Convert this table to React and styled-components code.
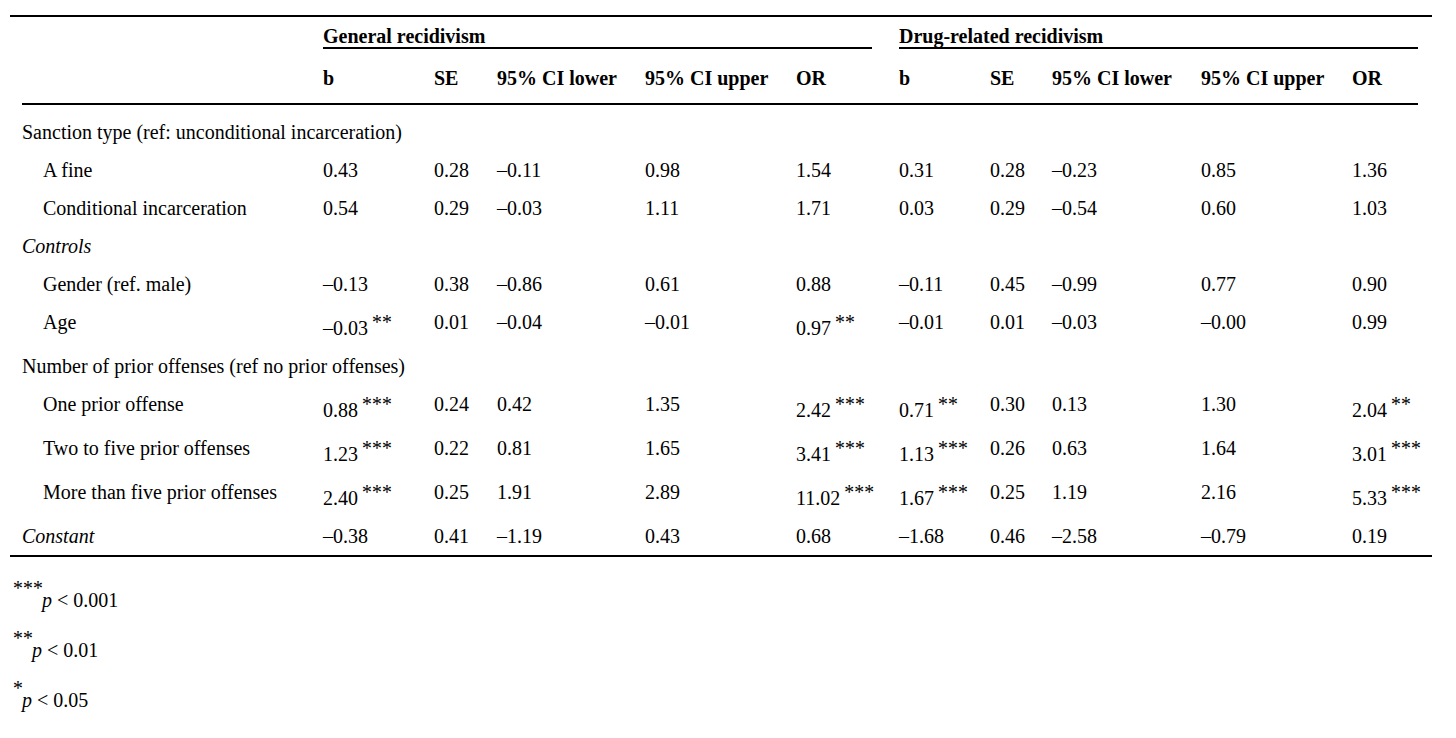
import React from "react";
import styled, { createGlobalStyle } from "styled-components";

const Global = createGlobalStyle`
  html, body { margin: 0; padding: 0; background: #fff; }
  body { font-family: "Liberation Serif", "Times New Roman", serif; color: #000; }
`;

const Page = styled.div`
  padding: 15px 0 0 10px;
`;

const Frame = styled.div`
  box-sizing: border-box;
  width: 1422px;
  border-top: 2px solid #000;
  border-bottom: 2px solid #000;
  padding: 0 14px 0 12px;
`;

const Table = styled.table`
  width: 1396px;
  table-layout: fixed;
  border-collapse: collapse;
  font-family: "Liberation Serif", "Times New Roman", serif;
  font-size: 20px;
  color: #000;
`;

const GroupCell = styled.th`
  padding: 9px 0 0 0;
  text-align: left;
  font-weight: bold;
  line-height: 21px;
  vertical-align: top;
`;

const GroupTitle = styled.div`
  border-bottom: 2px solid #000;
  margin-right: ${(p) => p.$gap || 0}px;
  white-space: nowrap;
`;

const HeadRow = styled.tr`
  border-bottom: 2px solid #000;
`;

const HeadCell = styled.th`
  padding: 17px 0 13px 0;
  text-align: left;
  font-weight: bold;
  line-height: 24px;
  white-space: nowrap;
`;

const Body = styled.tbody`
  & > tr:first-child > td {
    padding-top: 15px;
  }
`;

const Cell = styled.td`
  padding: 7px 0;
  line-height: 24px;
  vertical-align: top;
  text-align: left;
  white-space: nowrap;
`;

const Label = styled(Cell)`
  padding-left: ${(p) => (p.$indent ? 21 : 0)}px;
  font-style: ${(p) => (p.$italic ? "italic" : "normal")};
`;

const Stars = styled.sup`
  font-size: 20px;
  font-style: italic;
  line-height: 24px;
  vertical-align: 6px;
  margin-left: 3px;
`;

const Notes = styled.div`
  font-family: "Liberation Serif", "Times New Roman", serif;
  font-size: 20px;
  padding: 5px 0 0 2px;
`;

const Note = styled.div`
  margin-top: 14px;
  line-height: 24px;
`;

const NoteStars = styled.sup`
  font-size: 20px;
  font-style: italic;
  line-height: 24px;
  vertical-align: 12px;
`;

const P = styled.i``;

const widths = [301, 111, 63, 148, 151, 103, 91, 62, 149, 151, 66];
const heads = ["b", "SE", "95% CI lower", "95% CI upper", "OR", "b", "SE", "95% CI lower", "95% CI upper", "OR"];

const rows = [
  { section: "Sanction type (ref: unconditional incarceration)" },
  { label: "A fine", indent: true, v: ["0.43", "0.28", "–0.11", "0.98", "1.54", "0.31", "0.28", "–0.23", "0.85", "1.36"] },
  { label: "Conditional incarceration", indent: true, v: ["0.54", "0.29", "–0.03", "1.11", "1.71", "0.03", "0.29", "–0.54", "0.60", "1.03"] },
  { section: "Controls", italic: true },
  { label: "Gender (ref. male)", indent: true, v: ["–0.13", "0.38", "–0.86", "0.61", "0.88", "–0.11", "0.45", "–0.99", "0.77", "0.90"] },
  { label: "Age", indent: true, v: ["–0.03**", "0.01", "–0.04", "–0.01", "0.97**", "–0.01", "0.01", "–0.03", "–0.00", "0.99"] },
  { section: "Number of prior offenses (ref no prior offenses)" },
  { label: "One prior offense", indent: true, v: ["0.88***", "0.24", "0.42", "1.35", "2.42***", "0.71**", "0.30", "0.13", "1.30", "2.04**"] },
  { label: "Two to five prior offenses", indent: true, v: ["1.23***", "0.22", "0.81", "1.65", "3.41***", "1.13***", "0.26", "0.63", "1.64", "3.01***"] },
  { label: "More than five prior offenses", indent: true, v: ["2.40***", "0.25", "1.91", "2.89", "11.02***", "1.67***", "0.25", "1.19", "2.16", "5.33***"] },
  { label: "Constant", italic: true, v: ["–0.38", "0.41", "–1.19", "0.43", "0.68", "–1.68", "0.46", "–2.58", "–0.79", "0.19"] },
];

function Value({ text }) {
  const m = text.match(/^([^*]+)(\**)$/);
  const num = m ? m[1] : text;
  const stars = m ? m[2] : "";
  return (
    <Cell>
      {num}
      {stars && <Stars>{stars}</Stars>}
    </Cell>
  );
}

export default function App() {
  return (
    <>
      <Global />
      <Page>
        <Frame>
          <Table>
            <colgroup>
              {widths.map((w, i) => (
                <col key={i} style={{ width: w }} />
              ))}
            </colgroup>
            <thead>
              <tr>
                <GroupCell />
                <GroupCell colSpan={5}>
                  <GroupTitle $gap={27}>General recidivism</GroupTitle>
                </GroupCell>
                <GroupCell colSpan={5}>
                  <GroupTitle>Drug-related recidivism</GroupTitle>
                </GroupCell>
              </tr>
              <HeadRow>
                <HeadCell />
                {heads.map((h, i) => (
                  <HeadCell key={i}>{h}</HeadCell>
                ))}
              </HeadRow>
            </thead>
            <Body>
              {rows.map((r, i) =>
                r.section ? (
                  <tr key={i}>
                    <Label colSpan={11} $italic={r.italic}>
                      {r.section}
                    </Label>
                  </tr>
                ) : (
                  <tr key={i}>
                    <Label $indent={r.indent} $italic={r.italic}>
                      {r.label}
                    </Label>
                    {r.v.map((t, j) => (
                      <Value key={j} text={t} />
                    ))}
                  </tr>
                )
              )}
            </Body>
          </Table>
        </Frame>
        <Notes>
          <Note>
            <NoteStars>***</NoteStars>
            <P>p</P> &lt; 0.001
          </Note>
          <Note>
            <NoteStars>**</NoteStars>
            <P>p</P> &lt; 0.01
          </Note>
          <Note>
            <NoteStars>*</NoteStars>
            <P>p</P> &lt; 0.05
          </Note>
        </Notes>
      </Page>
    </>
  );
}
